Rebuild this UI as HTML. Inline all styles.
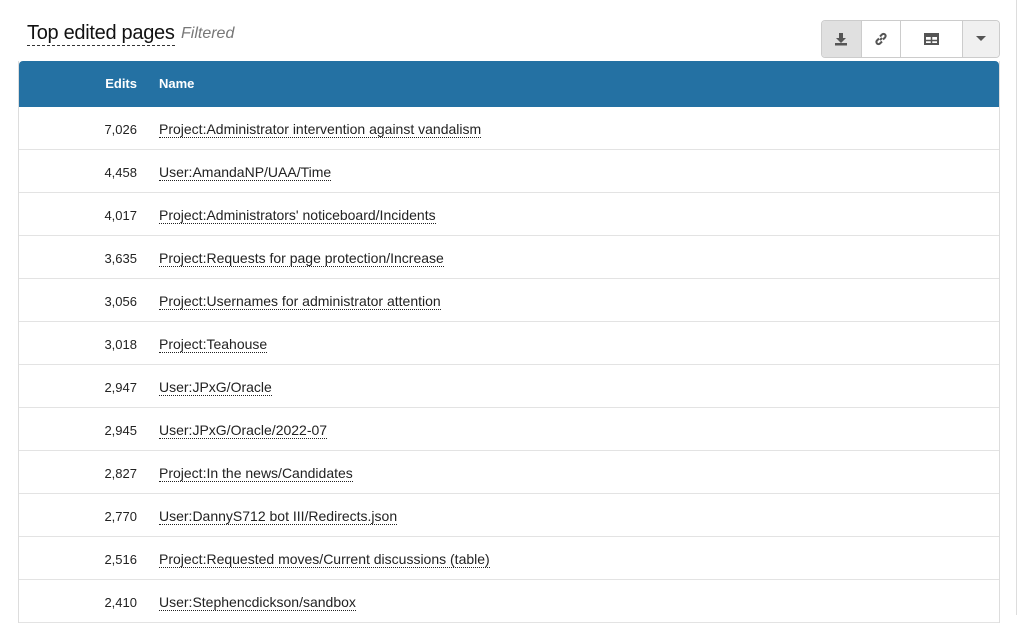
<!DOCTYPE html>
<html><head><style>
body{margin:0;background:#fff;font-family:"Liberation Sans",sans-serif;width:1023px;height:615px;overflow:hidden;position:relative}
.title{position:absolute;left:27px;top:22px;font-size:20px;color:#111;border-bottom:1px dashed #333;line-height:23px;letter-spacing:-0.3px}
.filt{position:absolute;left:181px;top:25px;font-size:16px;font-style:italic;color:#777}
.grp{position:absolute;left:821px;top:20px;width:177px;height:36px;border:1px solid #ccc;border-radius:4px;overflow:hidden;display:flex;background:#fff}
.grp div{height:36px;display:flex;align-items:center;justify-content:center;border-right:1px solid #ccc}
.tbl{position:absolute;left:18px;top:61px;width:980px;border-left:1px solid #ddd;border-right:1px solid #ddd}
.hd{height:46px;background:#2471a3;border-radius:4px 4px 0 0;color:#fff;font-weight:bold;font-size:13px;position:relative}
.row{height:42px;border-bottom:1px solid #e3e3e3;position:relative;font-size:14px;color:#222}
.n{position:absolute;right:862px;top:15px;font-size:13px}
.t{position:absolute;left:140px;top:15px;border-bottom:1px dotted #222;line-height:15px}
.hd .n{top:15px}.hd .t{top:15px;border:none;font-size:13px}
.vline{position:absolute;left:1016px;top:0;width:1px;height:615px;background:#ddd}
</style></head><body>
<div class="title">Top edited pages</div><div class="filt">Filtered</div>
<div class="grp">
<div style="width:39px;background:#e0e0e0"><svg width="14" height="14" viewBox="0 0 14 14"><path d="M5 1h4v5h3l-5 5-5-5h3z" fill="#555"/><rect x="1" y="11" width="12" height="2.5" fill="#555"/></svg></div>
<div style="width:38px"><svg width="14" height="14" viewBox="0 0 14 14" fill="none" stroke="#555" stroke-width="2"><path d="M6 8l2-2"/><path d="M5 6.5L3 8.5a2 2 0 003 3l2-2"/><path d="M9 7.5l2-2a2 2 0 00-3-3l-2 2"/></svg></div>
<div style="width:62px"><svg width="15" height="12" viewBox="0 0 15 12"><rect x="1" y="1" width="13" height="10" fill="none" stroke="#555" stroke-width="2"/><rect x="1" y="1" width="13" height="3" fill="#555"/><path d="M7.5 4v7M1 7.5h13" stroke="#555" stroke-width="1.5"/></svg></div>
<div style="width:36px;background:#f0f0f0;border:none"><svg width="10" height="6"><path d="M0 0h10L5 5z" fill="#555"/></svg></div>
</div>
<div class="tbl">
<div class="hd"><span class="n">Edits</span><span class="t">Name</span></div>
<div class="row"><span class="n">7,026</span><span class="t">Project:Administrator intervention against vandalism</span></div>
<div class="row"><span class="n">4,458</span><span class="t">User:AmandaNP/UAA/Time</span></div>
<div class="row"><span class="n">4,017</span><span class="t">Project:Administrators' noticeboard/Incidents</span></div>
<div class="row"><span class="n">3,635</span><span class="t">Project:Requests for page protection/Increase</span></div>
<div class="row"><span class="n">3,056</span><span class="t">Project:Usernames for administrator attention</span></div>
<div class="row"><span class="n">3,018</span><span class="t">Project:Teahouse</span></div>
<div class="row"><span class="n">2,947</span><span class="t">User:JPxG/Oracle</span></div>
<div class="row"><span class="n">2,945</span><span class="t">User:JPxG/Oracle/2022-07</span></div>
<div class="row"><span class="n">2,827</span><span class="t">Project:In the news/Candidates</span></div>
<div class="row"><span class="n">2,770</span><span class="t">User:DannyS712 bot III/Redirects.json</span></div>
<div class="row"><span class="n">2,516</span><span class="t">Project:Requested moves/Current discussions (table)</span></div>
<div class="row"><span class="n">2,410</span><span class="t">User:Stephencdickson/sandbox</span></div>
</div>
<div class="vline"></div>
</body></html>
